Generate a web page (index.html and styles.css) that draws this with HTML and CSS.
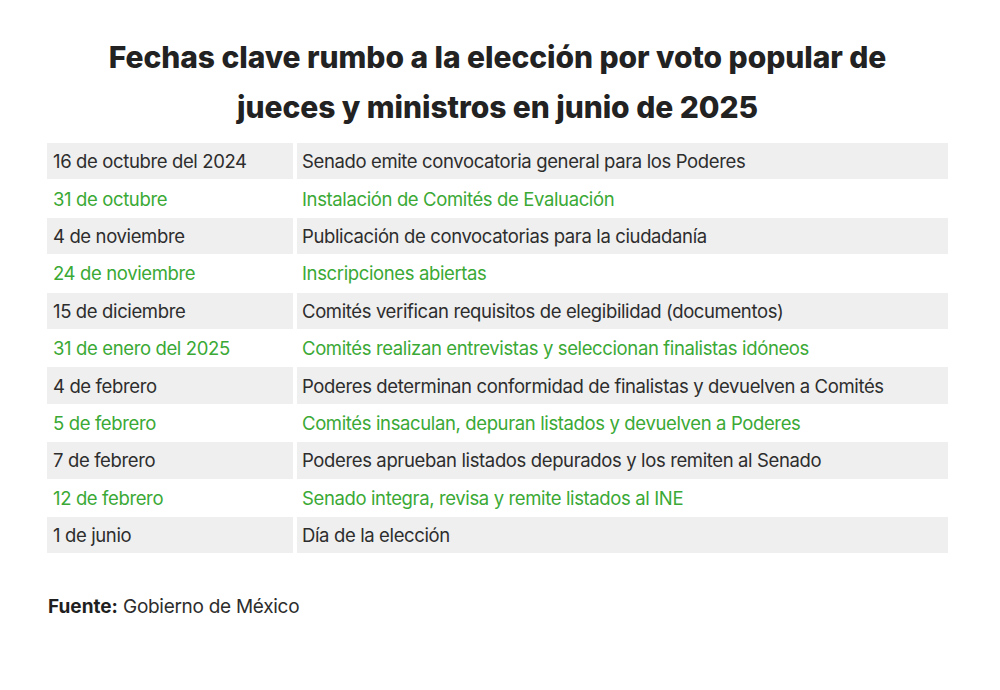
FILE: index.html
```html
<!DOCTYPE html>
<html lang="es">
<head>
<meta charset="utf-8">
<link rel="stylesheet" href="styles.css">
</head>
<body>
<main class="page">
  <h1 class="title">Fechas clave rumbo a la elección por voto popular de<br>jueces y ministros en junio de 2025</h1>
  <div class="table">
    <div class="row gray"><div class="cell date">16 de octubre del 2024</div><div class="cell">Senado emite convocatoria general para los Poderes</div></div>
    <div class="row green"><div class="cell date">31 de octubre</div><div class="cell">Instalación de Comités de Evaluación</div></div>
    <div class="row gray"><div class="cell date">4 de noviembre</div><div class="cell">Publicación de convocatorias para la ciudadanía</div></div>
    <div class="row green"><div class="cell date">24 de noviembre</div><div class="cell">Inscripciones abiertas</div></div>
    <div class="row gray"><div class="cell date">15 de diciembre</div><div class="cell">Comités verifican requisitos de elegibilidad (documentos)</div></div>
    <div class="row green"><div class="cell date">31 de enero del 2025</div><div class="cell">Comités realizan entrevistas y seleccionan finalistas idóneos</div></div>
    <div class="row gray"><div class="cell date">4 de febrero</div><div class="cell">Poderes determinan conformidad de finalistas y devuelven a Comités</div></div>
    <div class="row green"><div class="cell date">5 de febrero</div><div class="cell">Comités insaculan, depuran listados y devuelven a Poderes</div></div>
    <div class="row gray"><div class="cell date">7 de febrero</div><div class="cell">Poderes aprueban listados depurados y los remiten al Senado</div></div>
    <div class="row green"><div class="cell date">12 de febrero</div><div class="cell">Senado integra, revisa y remite listados al INE</div></div>
    <div class="row gray"><div class="cell date">1 de junio</div><div class="cell">Día de la elección</div></div>
  </div>
  <p class="source"><strong>Fuente:</strong> Gobierno de México</p>
</main>
</body>
</html>
```
FILE: styles.css
```css
html, body {
  margin: 0;
  padding: 0;
  background: #ffffff;
}
body {
  font-family: "Inter", "Liberation Sans", sans-serif;
  color: #2a2a2a;
}
.page {
  width: 1000px;
  height: 690px;
  padding: 32px 52px 0 47px;
  box-sizing: border-box;
}
.title {
  margin: 0 0 11px 0;
  text-align: center;
  font-size: 30px;
  line-height: 50px;
  font-weight: 800;
  letter-spacing: -0.002em;
  color: #222222;
}
.table {
  display: flex;
  flex-direction: column;
  gap: 1px;
}
.row {
  display: grid;
  grid-template-columns: 246px 1fr;
  column-gap: 4px;
  height: 36.4px;
  font-size: 18.5px;
  letter-spacing: -0.02em;
}
.cell {
  display: flex;
  align-items: center;
  padding-left: 6px;
}
.cell + .cell {
  padding-left: 5px;
}
.row.gray .cell {
  background: #efefef;
  color: #2d2d2d;
}
.row.green .cell {
  color: #3aa935;
}
.source {
  margin: 42px 0 0 1px;
  font-size: 19px;
  letter-spacing: -0.015em;
  color: #2d2d2d;
}
.source strong {
  font-weight: 700;
  color: #1f1f1f;
  letter-spacing: 0;
}
```
